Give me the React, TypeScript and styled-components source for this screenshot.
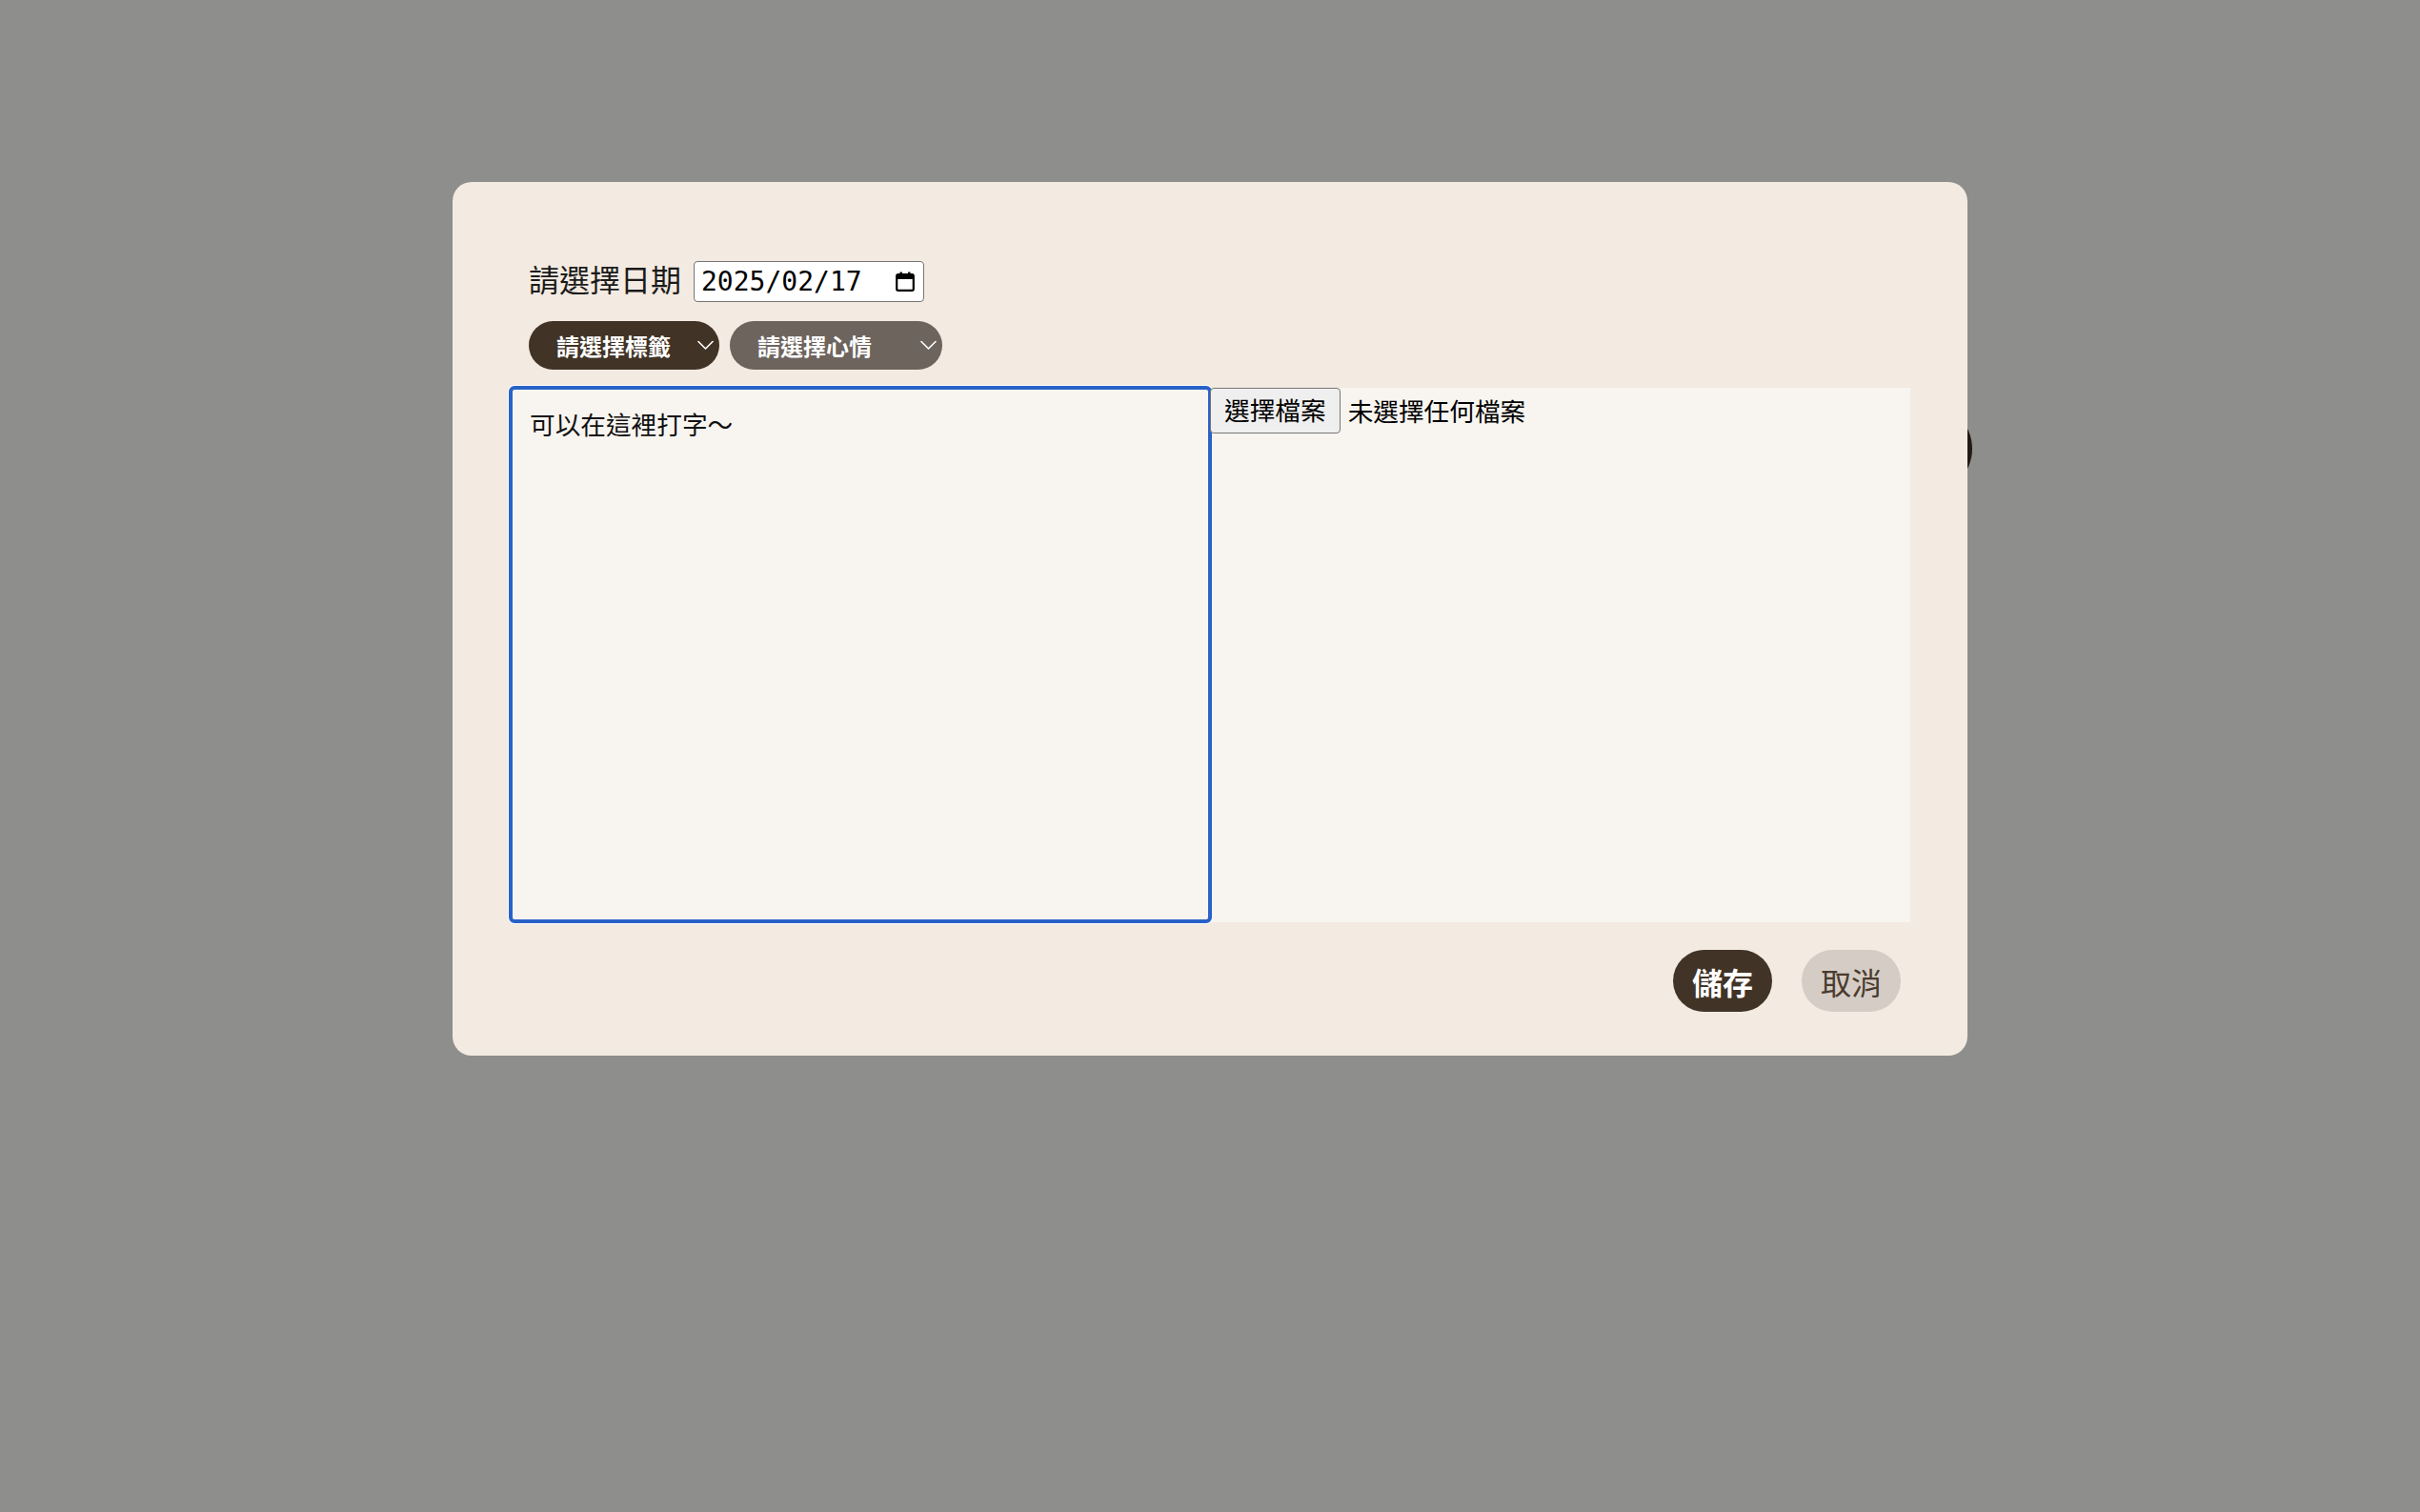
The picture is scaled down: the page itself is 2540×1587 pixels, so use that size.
import React from "react";
import styled, { createGlobalStyle } from "styled-components";

const Global = createGlobalStyle`
  html, body { margin: 0; padding: 0; }
  body {
    background: #8e8e8c;
    font-family: "Noto Sans CJK TC", "Noto Sans", sans-serif;
  }
  * { box-sizing: border-box; }
`;

const Page = styled.div`
  position: relative;
  width: 2540px;
  height: 1587px;
  display: flex;
  flex-direction: column;
  align-items: center;
  padding-top: 191px;
  background: #8e8e8c;
  overflow: hidden;
`;

const BackdropFab = styled.div`
  position: absolute;
  left: 1976px;
  top: 424px;
  width: 94px;
  height: 94px;
  border-radius: 50%;
  background: #221a14;
`;

const Modal = styled.div`
  position: relative;
  z-index: 1;
  width: 1590px;
  height: 917px;
  background: #f3eae1;
  border-radius: 20px;
  padding: 83px 60px 46px 59px;
  display: flex;
  flex-direction: column;
`;

const Controls = styled.div`
  padding-left: 21px;
  display: flex;
  flex-direction: column;
  gap: 20px;
`;

const DateRow = styled.div`
  display: flex;
  align-items: center;
  gap: 13px;
  height: 43px;
`;

const DateLabel = styled.span`
  font-size: 32px;
  color: #1b1b1b;
  line-height: 1;
  margin-top: -7px;
`;

const DateBox = styled.div`
  width: 242px;
  height: 43px;
  background: #fff;
  border: 1.5px solid #767676;
  border-radius: 4px;
  display: flex;
  align-items: center;
  justify-content: space-between;
  padding: 0 9px 0 7px;
`;

const DateText = styled.span`
  font-family: "DejaVu Sans Mono", monospace;
  font-size: 28px;
  line-height: 1;
  color: #000;
`;

const SelectRow = styled.div`
  display: flex;
  gap: 11px;
`;

const Pill = styled.div<{ $w: number; $bg: string }>`
  width: ${(p) => p.$w}px;
  height: 51px;
  border-radius: 26px;
  background: ${(p) => p.$bg};
  color: #fff;
  display: flex;
  align-items: center;
  justify-content: space-between;
  padding: 0 6px 0 29px;
  font-size: 24px;
  font-weight: 700;
`;

const Body = styled.div`
  margin-top: 17px;
  display: grid;
  grid-template-columns: 738px 1fr;
  align-items: center;
`;

const TextArea = styled.textarea`
  width: 738px;
  height: 564px;
  resize: none;
  border: 4px solid #2962c8;
  border-radius: 6px;
  box-shadow: 0 0 0 1px #fff;
  background: #f8f5f0;
  padding: 16px 18px;
  font-family: "Noto Sans CJK TC", "Noto Sans", sans-serif;
  font-size: 26.67px;
  color: #111;
  outline: none;
  &::placeholder { color: #111; opacity: 1; }
`;

const FilePanel = styled.div`
  height: 561px;
  background: #f8f5f0;
  display: flex;
  align-items: flex-start;
  gap: 8px;
`;

const FileButton = styled.button`
  height: 48px;
  padding: 0 14px;
  margin-left: -2px;
  background: #efefef;
  border: 1.5px solid #767676;
  border-radius: 4px;
  font-family: "Noto Sans CJK TC", "Noto Sans", sans-serif;
  font-size: 26.67px;
  color: #000;
  display: flex;
  align-items: center;
  line-height: 1;
`;

const FileStatus = styled.span`
  font-size: 26.67px;
  color: #000;
  line-height: 48px;
`;

const Footer = styled.div`
  margin-top: 28px;
  display: flex;
  justify-content: flex-end;
  gap: 31px;
  padding-right: 10px;
`;

const ActionButton = styled.button<{ $primary?: boolean }>`
  width: 104px;
  height: 65px;
  border: none;
  border-radius: 33px;
  background: ${(p) => (p.$primary ? "#413326" : "#d5cdc5")};
  color: ${(p) => (p.$primary ? "#fff" : "#4a3b2f")};
  font-family: "Noto Sans CJK TC", "Noto Sans", sans-serif;
  font-size: 32px;
  font-weight: ${(p) => (p.$primary ? 700 : 400)};
  display: flex;
  align-items: center;
  justify-content: center;
  padding: 0;
  line-height: 1;
`;

const Chevron = () => (
  <svg width="17" height="11" viewBox="0 0 17 11" fill="none">
    <path d="M1 1.5 L8.5 9 L16 1.5" stroke="#fff" strokeWidth="1.6" strokeLinecap="round" strokeLinejoin="round" />
  </svg>
);

const CalendarIcon = () => (
  <svg width="20" height="21" viewBox="0 0 20 21" fill="none">
    <rect x="1.2" y="3.2" width="17.6" height="16.6" rx="1.5" stroke="#000" strokeWidth="2.2" />
    <rect x="1" y="3" width="18" height="5" fill="#000" />
    <rect x="4.5" y="0.5" width="2.4" height="4" fill="#000" />
    <rect x="13.1" y="0.5" width="2.4" height="4" fill="#000" />
  </svg>
);

export default function App() {
  return (
    <>
      <Global />
      <Page>
        <BackdropFab />
        <Modal>
          <Controls>
            <DateRow>
              <DateLabel>請選擇日期</DateLabel>
              <DateBox>
                <DateText>2025/02/17</DateText>
                <CalendarIcon />
              </DateBox>
            </DateRow>
            <SelectRow>
              <Pill $w={200} $bg="#413326">
                <span>請選擇標籤</span>
                <Chevron />
              </Pill>
              <Pill $w={223} $bg="#6e645e">
                <span>請選擇心情</span>
                <Chevron />
              </Pill>
            </SelectRow>
          </Controls>
          <Body>
            <TextArea placeholder="可以在這裡打字～" />
            <FilePanel>
              <FileButton>選擇檔案</FileButton>
              <FileStatus>未選擇任何檔案</FileStatus>
            </FilePanel>
          </Body>
          <Footer>
            <ActionButton $primary>儲存</ActionButton>
            <ActionButton>取消</ActionButton>
          </Footer>
        </Modal>
      </Page>
    </>
  );
}
